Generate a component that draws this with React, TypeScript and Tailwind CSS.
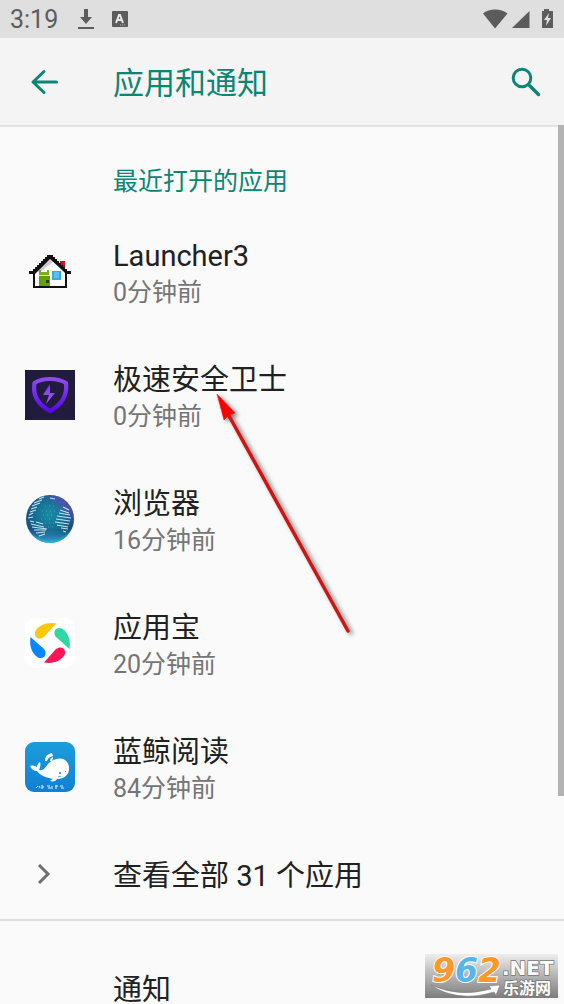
import React from 'react';

interface AppItem {
  name: string;
  lastOpened: string;
  icon: React.ReactNode;
}

const LauncherIcon = () => (
  <svg viewBox="0 0 50 50" className="size-[50px]" aria-hidden="true">
    <rect x="35" y="15" width="5" height="9" fill="#c4161c" />
    <path d="M8 26L25 11L42 26V42H8Z" fill="#fff" />
    <path d="M12 24L25 13L28 16L14 27Z" fill="#cfcfcf" />
    <path
      d="M4 28V25H8V23H10V21H12V19H14V17H16V15H18V13H20V11H22V9H28V11H30V13H32V15H34V17H36V19H38V21H40V23H42V25H46V28H42V42H8V28ZM10 28V40H40V27L36 23L25 13L14 24Z"
      fill="#111"
      fillRule="evenodd"
    />
    <path d="M14 24H16V26H22V24H24V29H14Z" fill="#7fab1c" />
    <rect x="14" y="30" width="11" height="10" fill="#669f00" />
    <rect x="14" y="29" width="11" height="1" fill="#d9e8b8" />
    <rect x="21" y="34" width="3" height="3" fill="#29420a" />
    <rect x="27" y="25" width="9" height="9" fill="#3ba8dc" />
    <rect x="29" y="26" width="5" height="6" fill="#55c1ef" />
  </svg>
);

const ShieldIcon = () => (
  <svg viewBox="0 0 50 50" className="size-[50px]" aria-hidden="true">
    <defs>
      <linearGradient id="shield" x1="0" y1="0" x2="0" y2="1">
        <stop offset="0" stopColor="#8f4bea" />
        <stop offset="1" stopColor="#5708ee" />
      </linearGradient>
      <linearGradient id="bolt" x1="0" y1="0" x2="0" y2="1">
        <stop offset="0" stopColor="#7836ee" />
        <stop offset="1" stopColor="#a85bf0" />
      </linearGradient>
    </defs>
    <rect width="50" height="50" fill="#211b3d" />
    <path
      d="M25 9C29 9 36 10 41 13C42 22 40 33 25 41C10 33 8 22 9.500 13C14 10 21 9 25 9Z"
      fill="none"
      stroke="url(#shield)"
      strokeWidth="4.200"
      strokeLinejoin="round"
    />
    <path d="M25 14L18 25H24L21 34L30 23H25Z" fill="url(#bolt)" />
  </svg>
);

const GlobeIcon = () => (
  <svg viewBox="0 0 50 50" className="size-[50px]" aria-hidden="true">
    <defs>
      <radialGradient id="globe" cx="0.5" cy="0.4" r="0.62">
        <stop offset="0" stopColor="#188da4" />
        <stop offset="0.55" stopColor="#176c91" />
        <stop offset="0.85" stopColor="#194e7d" />
        <stop offset="1" stopColor="#2ba7d2" />
      </radialGradient>
      <linearGradient id="globeEdge" x1="0.5" y1="0.5" x2="1" y2="0">
        <stop offset="0.3" stopColor="#6346bd" stopOpacity="0" />
        <stop offset="0.8" stopColor="#7048c8" stopOpacity="0.9" />
      </linearGradient>
      <linearGradient id="globeBase" x1="0" y1="0" x2="0" y2="1">
        <stop offset="0.72" stopColor="#27a1cc" stopOpacity="0" />
        <stop offset="1" stopColor="#35b5df" stopOpacity="0.9" />
      </linearGradient>
    </defs>
    <circle cx="25" cy="25" r="24" fill="url(#globe)" />
    <circle cx="25" cy="25" r="24" fill="url(#globeEdge)" />
    <circle cx="25" cy="25" r="24" fill="url(#globeBase)" />
    <path
      d="M14 5l5-2M9 9l8-3M7 12l8-3M6 15l6-2M5 18l6-2M4 21l4-2M3 24l5-1M5 27l4 1M6 30l13 3M7 33l15 2M9 36l12 0M11 39l9-1M14 42l6-2M11 28l7 2M38 13l6 3M35 16l9 3M34 19l11 2M32 22l14 2M31 25l14 2M30 28l14 2M32 31l11 2M36 34l7 1M38 37l3 1M25 4l5 1"
      fill="none"
      stroke="#c3e2ef"
      strokeWidth="1.200"
    />
    <path
      d="M17 17H32M18 21H30M16 25H28M20 29H29M23 33H31M20 12H32"
      stroke="#64b6cb"
      strokeWidth="1"
      strokeDasharray="1 3"
      opacity="0.6"
    />
  </svg>
);

const petals = [
  { angle: 0, color: '#f8c80b' },
  { angle: 90, color: '#30d6a4' },
  { angle: 180, color: '#ff1557' },
  { angle: 270, color: '#0788f8' },
];

const AppStoreIcon = () => (
  <svg viewBox="0 0 50 50" className="size-[50px]" aria-hidden="true">
    <rect width="50" height="50" rx="10" fill="#fff" />
    {petals.map(({ angle, color }) => (
      <path
        key={angle}
        d="M31 5.500C22 4 14 7 10.500 13C8 19 14 23 19 19Z"
        fill={color}
        transform={`rotate(${angle} 25 25)`}
      />
    ))}
  </svg>
);

const WhaleIcon = () => (
  <svg viewBox="0 0 50 50" className="size-[50px]" aria-hidden="true">
    <defs>
      <linearGradient id="whale" x1="0" y1="0" x2="0" y2="1">
        <stop offset="0" stopColor="#1b9edb" />
        <stop offset="1" stopColor="#117fd2" />
      </linearGradient>
    </defs>
    <rect width="50" height="50" rx="9" fill="url(#whale)" />
    <path
      d="M5 24C8 23 10 24 12 25C12 23 13 21 15 20C16 23 15 26 14 28C18 29 20 26 23 22C28 16 38 14 42 20C47 27 43 37 32 37C31 39 28 40 25 39L28 37C19 35 15 33 12 29C9 29 6 27 5 24Z"
      fill="#fff"
    />
    <path d="M20 19Q20 12 27 11L28 14Q23 15 22 19ZM25 19Q25 16 28 15L28 17Q27 17 27 19Z" fill="#fff" />
    <circle cx="35" cy="31" r="1" fill="#167fc4" />
    <path d="M40 30l1-1M33 35l3-1" stroke="#4ca7da" />
    <path
      d="M11 46l2-2M14 44l1 2M16 44h2v2h-2M22 44h3M23 46h3M27 44v3M30 44h3M31 43v4M35 44h3M36 46h3"
      fill="none"
      stroke="#e4f4fc"
    />
  </svg>
);

const recentApps: AppItem[] = [
  { name: 'Launcher3', lastOpened: '0分钟前', icon: <LauncherIcon /> },
  { name: '极速安全卫士', lastOpened: '0分钟前', icon: <ShieldIcon /> },
  { name: '浏览器', lastOpened: '16分钟前', icon: <GlobeIcon /> },
  { name: '应用宝', lastOpened: '20分钟前', icon: <AppStoreIcon /> },
  { name: '蓝鲸阅读', lastOpened: '84分钟前', icon: <WhaleIcon /> },
];

const StatusBar = () => (
  <div className="flex h-[38px] shrink-0 items-center bg-[#dfdfdf] px-[10px] text-[#5c5c5c]">
    <span className="pt-0.5 text-[25px] leading-9">3:19</span>
    <svg viewBox="0 0 16 22" className="ml-5 h-[22px] w-4" fill="currentColor" aria-hidden="true">
      <path d="M6 1H10V9H14L8 16L2 9H6ZM0 19H16V21H0Z" />
    </svg>
    <svg viewBox="0 0 16 16" className="ml-[18px] size-4" aria-hidden="true">
      <rect width="16" height="16" rx="1" fill="#5c5c5c" />
      <path d="M4 12L7 4H8L11 12M5 9H10" fill="none" stroke="#e8e8e8" strokeWidth="2" />
      <path d="M8 14H14" stroke="#bbb" strokeDasharray="1 1" />
    </svg>
    <svg viewBox="0 0 72 22" className="ml-auto h-[22px] w-[72px]" fill="currentColor" aria-hidden="true">
      <path d="M1 5.500C7 0 19 0 25.500 5.500L13 20.500Z" />
      <path d="M47.500 3V20H30Z" />
      <path d="M62 1H67V3H70C71 3 71 3 71 4V19C71 20 71 20 70 20H61C60 20 60 20 60 19V4C60 3 60 3 61 3H62Z" />
      <path d="M67 5L62 12H65L64 18L69 10H66Z" fill="#dfdfdf" />
    </svg>
  </div>
);

const AppBar = () => (
  <header className="flex h-[89px] shrink-0 items-center border-b-2 border-[#e4e4e4] bg-[#f4f4f4] pr-[23px] pl-[30px] text-[#0b8574]">
    <button type="button" aria-label="返回" className="w-[83px]">
      <svg viewBox="0 0 28 26" className="h-[26px] w-7" fill="none" stroke="currentColor" strokeWidth="3" aria-hidden="true">
        <path d="M26.500 13H3M14 2.500L3 13L14 23.500" strokeLinecap="round" strokeLinejoin="round" />
      </svg>
    </button>
    <h1 className="flex-1 pt-1 text-[31px] leading-[44px]">应用和通知</h1>
    <button type="button" aria-label="搜索">
      <svg viewBox="0 0 30 30" className="size-[30px]" fill="none" stroke="currentColor" aria-hidden="true">
        <circle cx="11" cy="11" r="8.800" strokeWidth="3" />
        <path d="M17.500 17.500L27.500 27.500" strokeWidth="3.500" strokeLinecap="round" />
      </svg>
    </button>
  </header>
);

const AppRow: React.FC<{ app: AppItem }> = ({ app }) => (
  <li>
    <button type="button" className="flex h-[124px] w-full items-center pl-[25px] text-left">
      <span className="w-[88px] shrink-0">{app.icon}</span>
      <span className="min-w-0 pt-2">
        <span className="block text-[29px] leading-9 text-[#212121]">{app.name}</span>
        <span className="block text-[25px] leading-[38px] text-[#757575]">{app.lastOpened}</span>
      </span>
    </button>
  </li>
);

const Pointer = () => (
  <svg viewBox="0 0 150 256" className="pointer-events-none absolute top-[386px] left-[210px] h-64 w-[150px]" aria-hidden="true">
    <g className="drop-shadow-[3px_2px_2px_rgba(0,0,0,0.5)]">
      <path d="M18 28L138 245" stroke="#d01414" strokeWidth="3.500" strokeLinecap="round" />
      <path d="M7 8L25 27L19 29L14 34Z" fill="#f00" stroke="#f00" strokeWidth="0.500" />
    </g>
  </svg>
);

const Watermark = () => (
  <div className="absolute right-[6px] bottom-[6px] h-11 w-[133px] bg-linear-to-b from-[#eeeeee] to-[#7d7d7d] font-['DejaVu_Sans','Noto_Sans_CJK_SC',sans-serif]">
    <svg viewBox="0 0 133 44" className="size-full overflow-visible" aria-hidden="true">
      <path d="M6 31Q34 44 66 35L64 32L75 31L71 41L69 38Q32 49 6 31Z" fill="#fff" stroke="#777" strokeWidth="0.500" />
      <g fontWeight="bold" stroke="#fff" strokeWidth="2" paintOrder="stroke">
        <text x="7" y="28" fontSize="33" fontStyle="italic">
          <tspan fill="#ff982b">9</tspan>
          <tspan fill="#58b5ec">6</tspan>
          <tspan fill="#ff982b">2</tspan>
        </text>
      </g>
      <g fontWeight="bold" fill="#fff" stroke="#777" strokeWidth="1.500" paintOrder="stroke">
        <text x="77" y="21" fontSize="20">.NET</text>
        <text x="78" y="40" fontSize="16">乐游网</text>
      </g>
    </svg>
  </div>
);

const App: React.FC = () => {
  return (
    <div className="relative flex h-screen flex-col overflow-hidden bg-[#fafafa] font-[Roboto,'Noto_Sans_CJK_SC',sans-serif]">
      <StatusBar />
      <AppBar />
      <main className="min-h-0 flex-1 overflow-hidden">
        <section>
          <h2 className="flex h-[82px] items-center pt-7 pl-[113px] text-[25px] leading-9 text-[#0b8574]">
            最近打开的应用
          </h2>
          <ul>
            {recentApps.map((app) => (
              <AppRow key={app.name} app={app} />
            ))}
          </ul>
          <button type="button" className="flex h-[90px] w-full items-center pl-[37px] text-left">
            <svg viewBox="0 0 14 22" className="mr-[62px] h-[22px] w-3.5" fill="none" stroke="#6f6f6f" strokeWidth="3" aria-hidden="true">
              <path d="M2 2L11 11L2 20" />
            </svg>
            <span className="pt-1 text-[29px] leading-9 text-[#212121]">查看全部 31 个应用</span>
          </button>
        </section>
        <section className="border-t-2 border-[#dddddd]">
          <button type="button" className="w-full pt-[51px] pl-[113px] text-left text-[29px] leading-9 text-[#212121]">
            通知
          </button>
        </section>
      </main>
      <div className="absolute top-[125px] right-0 h-[671px] w-1.5 bg-[#b3b3b3]" />
      <Pointer />
      <Watermark />
    </div>
  );
};

export default App;
